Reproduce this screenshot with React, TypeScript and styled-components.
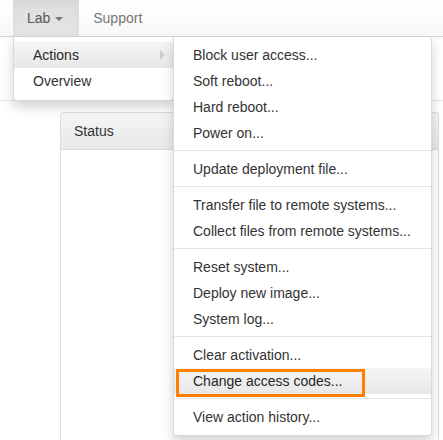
import React from "react";
import styled, { createGlobalStyle, css } from "styled-components";

const GlobalStyle = createGlobalStyle`
  html, body {
    margin: 0;
    padding: 0;
    background: #fff;
    overflow: hidden;
  }

  body {
    font-family: "Liberation Sans", Arial, Helvetica, sans-serif;
    font-size: 14px;
    line-height: 20px;
    color: #333;
  }

  * {
    box-sizing: border-box;
  }
`;

type Action = { label: string; selected?: boolean };

const actionGroups: Action[][] = [
  [
    { label: "Block user access..." },
    { label: "Soft reboot..." },
    { label: "Hard reboot..." },
    { label: "Power on..." },
  ],
  [{ label: "Update deployment file..." }],
  [{ label: "Transfer file to remote systems..." }, { label: "Collect files from remote systems..." }],
  [{ label: "Reset system..." }, { label: "Deploy new image..." }, { label: "System log..." }],
  [{ label: "Clear activation..." }, { label: "Change access codes...", selected: true }],
  [{ label: "View action history..." }],
];

const hoverGradient = css`
  background-image: linear-gradient(to bottom, #f5f5f5 0%, #e8e8e8 100%);
  color: #262626;
`;

const App = () => {
  return (
    <>
      <GlobalStyle />
      <Navbar>
        <NavList>
          <NavItem>
            <NavLink open>
              Lab <Caret />
            </NavLink>
            <DropdownMenu>
              <MenuItem active>
                <MenuLink hasSubmenu>Actions</MenuLink>
                <Submenu>
                  {actionGroups.map((group, i) => (
                    <React.Fragment key={i}>
                      {i > 0 && <Divider />}
                      {group.map((action) => (
                        <MenuItem key={action.label} active={action.selected}>
                          <MenuLink>{action.label}</MenuLink>
                          {action.selected && <Callout />}
                        </MenuItem>
                      ))}
                    </React.Fragment>
                  ))}
                </Submenu>
              </MenuItem>
              <MenuItem>
                <MenuLink>Overview</MenuLink>
              </MenuItem>
            </DropdownMenu>
          </NavItem>
          <NavItem>
            <NavLink>Support</NavLink>
          </NavItem>
        </NavList>
      </Navbar>
      <PageHeader />
      <Content>
        <Panel>
          <PanelHeading>Status</PanelHeading>
        </Panel>
      </Content>
    </>
  );
};

const Navbar = styled.nav`
  position: relative;
  z-index: 10;
  height: 37px;
  background-image: linear-gradient(to bottom, #ffffff 0%, #f8f8f8 100%);
  border-bottom: 1px solid #d4d4d4;
  box-shadow: 0 1px 4px rgba(0, 0, 0, 0.05);
  padding-left: 13px;
`;

const NavList = styled.ul`
  display: flex;
  margin: 0;
  padding: 0;
  list-style: none;
`;

const NavItem = styled.li`
  position: relative;
`;

const NavLink = styled.a<{ open?: boolean }>`
  display: block;
  height: 36px;
  padding: 8px 16px 8px 14px;
  line-height: 20px;
  color: #777;
  text-decoration: none;
  cursor: pointer;

  ${({ open }) =>
    open &&
    css`
      color: #555;
      background-image: linear-gradient(to bottom, #dedede 0%, #e5e5e5 100%);
      box-shadow: inset 0 3px 9px rgba(0, 0, 0, 0.04);
    `}
`;

const Caret = styled.span`
  display: inline-block;
  width: 0;
  height: 0;
  margin-left: 1px;
  vertical-align: middle;
  border-top: 4px solid #777;
  border-left: 4px solid transparent;
  border-right: 4px solid transparent;
`;

const DropdownMenu = styled.ul`
  position: absolute;
  top: 37px;
  left: 0;
  min-width: 161px;
  margin: 0;
  padding: 5px 0 6px;
  list-style: none;
  background: #fff;
  border: 1px solid rgba(0, 0, 0, 0.15);
  border-top: 0;
  border-radius: 0 0 4px 4px;
  box-shadow: 0 6px 12px rgba(0, 0, 0, 0.175);
  white-space: nowrap;
`;

const Submenu = styled.ul`
  position: absolute;
  top: -5px;
  left: 100%;
  margin: 0;
  padding: 5px 0;
  list-style: none;
  background: #fff;
  border: 1px solid rgba(0, 0, 0, 0.15);
  border-top: 0;
  border-radius: 0 4px 4px 4px;
  box-shadow: 0 6px 12px rgba(0, 0, 0, 0.175);
  white-space: nowrap;
`;

const MenuItem = styled.li<{ active?: boolean }>`
  position: relative;

  & > a {
    ${({ active }) => active && hoverGradient}
  }
`;

const MenuLink = styled.a<{ hasSubmenu?: boolean }>`
  display: block;
  padding: 3px 20px 3px 19px;
  line-height: 20px;
  color: #333;
  text-decoration: none;
  cursor: pointer;

  ${({ hasSubmenu }) =>
    hasSubmenu &&
    css`
      position: relative;

      &::after {
        content: "";
        position: absolute;
        top: 8px;
        right: 8px;
        width: 0;
        height: 0;
        border-top: 5px solid transparent;
        border-bottom: 5px solid transparent;
        border-left: 5px solid #ccc;
      }
    `}
`;

const Divider = styled.li`
  height: 1px;
  margin: 4px 0 5px;
  background: #e5e5e5;
`;

const Callout = styled.span`
  position: absolute;
  top: 1px;
  left: 2px;
  width: 189px;
  height: 28px;
  border: 3px solid #ff8000;
  pointer-events: none;
`;

const PageHeader = styled.div`
  height: 64px;
  border-bottom: 1px solid #e5e5e5;
`;

const Content = styled.main`
  padding: 11px 4px 0 60px;
`;

const Panel = styled.section`
  height: 340px;
  border: 1px solid #ddd;
  border-bottom: 0;
  border-radius: 4px 4px 0 0;
  background: #fff;
`;

const PanelHeading = styled.div`
  padding: 8px 13px;
  line-height: 20px;
  color: #333;
  border-bottom: 1px solid #ddd;
  border-radius: 3px 3px 0 0;
  background-image: linear-gradient(to bottom, #f5f5f5 0%, #e8e8e8 100%);
`;

export default App;
